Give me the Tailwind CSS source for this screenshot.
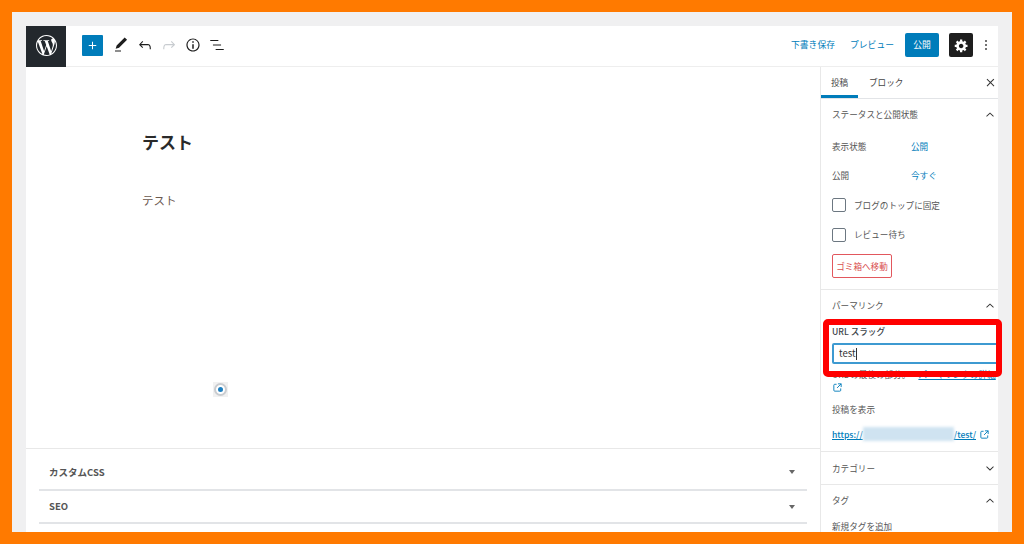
<!DOCTYPE html>
<html lang="ja">
<head>
    <meta charset="UTF-8">
    <title>投稿の編集</title>
    <script src="https://cdn.jsdelivr.net/npm/@tailwindcss/browser@4"></script>
</head>
<body class="bg-[#ff7a00] h-[544px] w-[1024px] overflow-hidden p-[12px] font-['Noto_Sans_CJK_JP','Noto_Sans',sans-serif] text-[#555555]">
    <div class="relative bg-[#f0f0f1] h-[520px] pt-[14px] px-[14px] overflow-hidden">
        <div class="bg-white h-[506px] flex flex-col">

            <!-- top bar -->
            <header class="h-[41px] shrink-0 flex items-center border-b border-[#eeeeee]">
                <div class="w-[40px] h-[41px] bg-[#23282d] flex items-center justify-center">
                    <svg class="mb-[2px] w-[21px] h-[21px] fill-white" viewBox="0 0 24 24"><path d="M21.469 6.825c.84 1.537 1.318 3.3 1.318 5.175 0 3.979-2.156 7.456-5.363 9.325l3.295-9.527c.615-1.54.82-2.771.82-3.864 0-.405-.026-.78-.07-1.11m-7.981.105c.647-.03 1.232-.105 1.232-.105.582-.075.514-.93-.067-.899 0 0-1.755.135-2.88.135-1.064 0-2.85-.15-2.85-.15-.585-.03-.661.855-.075.885 0 0 .54.061 1.125.09l1.68 4.605-2.37 7.08L5.354 6.9c.649-.03 1.234-.1 1.234-.1.585-.075.516-.93-.065-.896 0 0-1.746.138-2.874.138-.2 0-.438-.008-.69-.015C4.911 3.15 8.235 1.215 12 1.215c2.809 0 5.365 1.072 7.286 2.833-.046-.003-.091-.009-.141-.009-1.06 0-1.812.923-1.812 1.914 0 .89.513 1.643 1.06 2.531.411.72.89 1.643.89 2.977 0 .915-.354 1.994-.821 3.479l-1.075 3.585-3.9-11.61.001.014zM12 22.784c-1.059 0-2.081-.153-3.048-.437l3.237-9.406 3.315 9.087c.024.053.05.101.078.149-1.12.393-2.325.609-3.582.609M1.211 12c0-1.564.336-3.05.935-4.39L7.29 21.709C3.694 19.96 1.212 16.271 1.211 12M12 0C5.385 0 0 5.385 0 12s5.385 12 12 12 12-5.385 12-12S18.615 0 12 0"/></svg>
                </div>
                <div class="ml-[16px] mb-[2px] w-[21px] h-[21px] bg-[#007cba] rounded-[1px] flex items-center justify-center">
                    <svg class="w-[15px] h-[15px] fill-white" viewBox="0 0 24 24"><path d="M18 11.2h-5.2V6h-1.6v5.2H6v1.6h5.2V18h1.6v-5.2H18z"/></svg>
                </div>
                <div class="ml-[6px] mb-[2px] flex items-center text-[#1e1e1e]">
                    <svg class="w-[18px] h-[18px] fill-current mx-[3px]" viewBox="0 0 24 24"><path d="M20.1 5.1L16.9 2 6.2 12.7l-1.3 4.4 4.5-1.3L20.1 5.1zM4 20.8h8v-1.5H4v1.5z"/></svg>
                    <svg class="w-[18px] h-[18px] fill-current mx-[3px]" viewBox="0 0 24 24"><path d="M18.3 11.7c-.6-.6-1.4-.9-2.3-.9H6.7l2.9-3.3-1.1-1-4.5 5L8.5 16l1-1-2.7-2.7H16c.5 0 .9.2 1.3.5 1 1 1 3.4 1 4.5v.3h1.5v-.2c0-1.5 0-4.3-1.5-5.7z"/></svg>
                    <svg class="w-[18px] h-[18px] fill-[#c8ccd0] mx-[3px]" viewBox="0 0 24 24"><path d="M15.6 6.5l-1.1 1 2.9 3.3H8c-.9 0-1.7.3-2.3.9-1.4 1.5-1.4 4.2-1.4 5.6v.2h1.5v-.3c0-1.1 0-3.5 1-4.5.3-.3.7-.5 1.3-.5h9.2L14.5 15l1.1 1.1 4.6-4.6-4.6-5z"/></svg>
                    <svg class="w-[18px] h-[18px] fill-current mx-[3px]" viewBox="0 0 24 24"><path d="M12 3.2c-4.8 0-8.8 3.9-8.8 8.8 0 4.8 3.9 8.8 8.8 8.8 4.8 0 8.8-3.9 8.8-8.8 0-4.8-4-8.8-8.8-8.8zm0 16c-4 0-7.2-3.3-7.2-7.2C4.8 8 8 4.8 12 4.8s7.2 3.3 7.2 7.2c0 4-3.2 7.2-7.2 7.2zM11 17h2v-6h-2v6zm0-8h2V7h-2v2z"/></svg>
                    <svg class="w-[18px] h-[18px] fill-current mx-[3px]" viewBox="0 0 24 24"><path d="M13.8 5.2H3v1.5h10.8V5.2zm-3.6 12v1.5H21v-1.5H10.2zm7.2-6H6.6v1.5h10.8v-1.5z"/></svg>
                </div>
                <div class="ml-auto mb-[2px] flex items-center text-[8.8px] text-[#007cba]">
                    <span class="w-[43px] whitespace-nowrap">下書き保存</span>
                    <span class="ml-[16px] w-[43px] whitespace-nowrap">プレビュー</span>
                    <span class="ml-[12px] w-[34px] h-[24px] bg-[#007cba] rounded-[2px] text-white flex items-center justify-center">公開</span>
                    <span class="ml-[10px] w-[24px] h-[24px] bg-[#1e1e1e] rounded-[2px] flex items-center justify-center">
                        <svg class="w-[15px] h-[15px] fill-white" viewBox="0 0 20 20"><path d="M18 12h-2.18c-.17.7-.44 1.35-.81 1.93l1.54 1.54-2.1 2.1-1.54-1.54c-.58.36-1.23.63-1.91.79V19H8v-2.18c-.68-.16-1.33-.43-1.91-.79l-1.54 1.54-2.12-2.12 1.54-1.54c-.36-.58-.63-1.23-.79-1.91H1V9.03h2.17c.16-.7.44-1.35.8-1.94L2.43 5.55l2.1-2.1 1.54 1.54c.58-.37 1.24-.64 1.93-.81V2h3v2.18c.68.16 1.33.43 1.91.79l1.54-1.54 2.12 2.12-1.54 1.54c.36.59.64 1.24.8 1.94H18V12zm-8.5 1.5c1.66 0 3-1.34 3-3s-1.34-3-3-3-3 1.34-3 3 1.34 3 3 3z"/></svg>
                    </span>
                    <span class="w-[25px] flex flex-col items-center gap-[2px]">
                        <i class="w-[2px] h-[2px] bg-[#444] rounded-full"></i>
                        <i class="w-[2px] h-[2px] bg-[#444] rounded-full"></i>
                        <i class="w-[2px] h-[2px] bg-[#444] rounded-full"></i>
                    </span>
                </div>
            </header>

            <div class="flex flex-1 min-h-0">
                <!-- editor -->
                <main class="relative w-[794px] shrink-0 flex flex-col">
                    <div class="h-[382px] shrink-0 pl-[116px] pt-[61px] border-b border-[#e8e8e8]">
                        <h1 class="text-[17px] leading-[28px] font-bold text-[#2a2a2a]">テスト</h1>
                        <p class="mt-[34px] text-[11.5px] leading-[20px] text-[#6b5a50]">テスト</p>
                    </div>
                    <div class="px-[13px] flex-1 text-[9.5px] font-bold text-[#555555]">
                        <div class="h-[42px] pl-[10px] pr-[12px] pt-[6px] flex items-center justify-between border-b-2 border-[#e2e4e7]">
                            <span>カスタムCSS</span>
                            <i class="border-x-[3px] border-t-[4px] border-x-transparent border-t-[#666]"></i>
                        </div>
                        <div class="h-[33px] pl-[10px] pr-[12px] flex items-center justify-between border-b-2 border-[#e2e4e7]">
                            <span>SEO</span>
                            <i class="border-x-[3px] border-t-[4px] border-x-transparent border-t-[#666]"></i>
                        </div>
                    </div>
                    <div class="absolute left-[187px] top-[315px] w-[15px] h-[15px] bg-[#f1f1f1] flex items-center justify-center">
                        <span class="w-[13px] h-[13px] rounded-full bg-white border-2 border-[#c9ccd0] flex items-center justify-center">
                            <i class="w-[5px] h-[5px] rounded-full bg-[#1d7fc0]"></i>
                        </span>
                    </div>
                </main>

                <!-- sidebar -->
                <aside class="flex-1 border-l border-[#e8e8e8] text-[8.6px] overflow-hidden">
                    <div class="h-[32px] flex items-center border-b border-[#e2e4e7]">
                        <span class="w-[37px] h-[31px] pt-[3px] flex items-center justify-center border-b-[3px] border-[#007cba] text-[#444]">投稿</span>
                        <span class="ml-[11px] text-[#444]">ブロック</span>
                        <svg class="ml-auto w-[15px] h-[15px] fill-[#333]" viewBox="0 0 24 24"><path d="M13 12l5-5-1.2-1.2-5 5-5-5L5.8 7l5 5-5 5L7 18.200l5-5 5 5 1.200-1.200z"/></svg>
                    </div>

                    <section class="h-[191px] border-b border-[#e8e8e8] pl-[11px] pr-[1px]">
                        <div class="h-[31px] flex items-center justify-between">
                            <span>ステータスと公開状態</span>
                            <svg class="w-[14px] h-[14px] fill-[#333]" viewBox="0 0 24 24"><path d="M6.500 15l5.500-5 5.500 5 1-1.200L12 7.500l-6.500 6.300z"/></svg>
                        </div>
                        <div class="h-[29px] mt-[2px] flex items-center"><span class="w-[79px]">表示状態</span><span class="text-[#007cba]">公開</span></div>
                        <div class="h-[29px] flex items-center"><span class="w-[79px]">公開</span><span class="text-[#007cba]">今すぐ</span></div>
                        <label class="h-[30px] flex items-center gap-[8px]"><i class="w-[14px] h-[14px] border border-[#6c7781] rounded-[2px]"></i>ブログのトップに固定</label>
                        <label class="h-[29px] flex items-center gap-[8px]"><i class="w-[14px] h-[14px] border border-[#6c7781] rounded-[2px]"></i>レビュー待ち</label>
                        <span class="mt-[5px] inline-flex items-center justify-center w-[60px] h-[24px] border border-[#e2575d] rounded-[2px] text-[#d94f4f]">ゴミ箱へ移動</span>
                    </section>

                    <section class="h-[162px] border-b border-[#e8e8e8] pl-[11px]">
                        <div class="h-[31px] pr-[1px] flex items-center justify-between">
                            <span>パーマリンク</span>
                            <svg class="w-[14px] h-[14px] fill-[#333]" viewBox="0 0 24 24"><path d="M6.500 15l5.500-5 5.500 5 1-1.200L12 7.500l-6.500 6.300z"/></svg>
                        </div>
                        <div class="h-[14px] mt-[3px] flex items-center font-medium text-[#3c434a]">URL スラッグ</div>
                        <div class="mt-[5px] h-[21px] border-2 border-[#3d9ad1] rounded-[2px] -mr-[2px] pl-[5px] flex items-center text-[#333] text-[9.5px]">test<i class="w-px h-[12px] bg-[#333]"></i></div>
                        <div class="mt-[3px] h-[14px] flex items-center whitespace-nowrap">URL の最後の部分。<span class="ml-[8px] text-[#007cba] underline">パーマリンクの詳細</span></div>
                        <svg class="mt-[1px] w-[11px] h-[11px] fill-none stroke-[#007cba] stroke-2" viewBox="0 0 24 24"><path d="M10 5H6a2 2 0 0 0-2 2v11a2 2 0 0 0 2 2h11a2 2 0 0 0 2-2v-4M13 4h7v7M20 4l-9 9"/></svg>
                        <div class="mt-[9px] h-[14px] flex items-center">投稿を表示</div>
                        <div class="mt-[10px] h-[16px] flex items-center text-[#007cba] font-medium">
                            <span class="underline">https://</span>
                            <span class="w-[91px] h-[14px] bg-[#cfe3f1] blur-[1.5px]"></span>
                            <span class="underline">/test/</span>
                            <svg class="ml-[3px] w-[11px] h-[11px] fill-none stroke-[#007cba] stroke-2" viewBox="0 0 24 24"><path d="M10 5H6a2 2 0 0 0-2 2v11a2 2 0 0 0 2 2h11a2 2 0 0 0 2-2v-4M13 4h7v7M20 4l-9 9"/></svg>
                        </div>
                    </section>

                    <section class="h-[33px] border-b border-[#e8e8e8] pl-[11px] pr-[1px] flex items-center justify-between">
                        <span>カテゴリー</span>
                        <svg class="w-[14px] h-[14px] fill-[#333]" viewBox="0 0 24 24"><path d="M17.500 9l-5.500 5-5.500-5-1 1.200 6.500 6.300 6.500-6.300z"/></svg>
                    </section>

                    <section class="pl-[11px] pr-[1px]">
                        <div class="h-[31px] flex items-center justify-between">
                            <span>タグ</span>
                            <svg class="w-[14px] h-[14px] fill-[#333]" viewBox="0 0 24 24"><path d="M6.500 15l5.500-5 5.500 5 1-1.200L12 7.500l-6.500 6.300z"/></svg>
                        </div>
                        <div class="mt-[3px] h-[14px] flex items-center">新規タグを追加</div>
                    </section>
                </aside>
            </div>
        </div>

        <!-- red callout around the slug field -->
        <div class="absolute left-[811px] top-[307px] w-[179px] h-[58px] border-[6px] border-[#ff0000] rounded-[5px]"></div>
    </div>
</body>
</html>
